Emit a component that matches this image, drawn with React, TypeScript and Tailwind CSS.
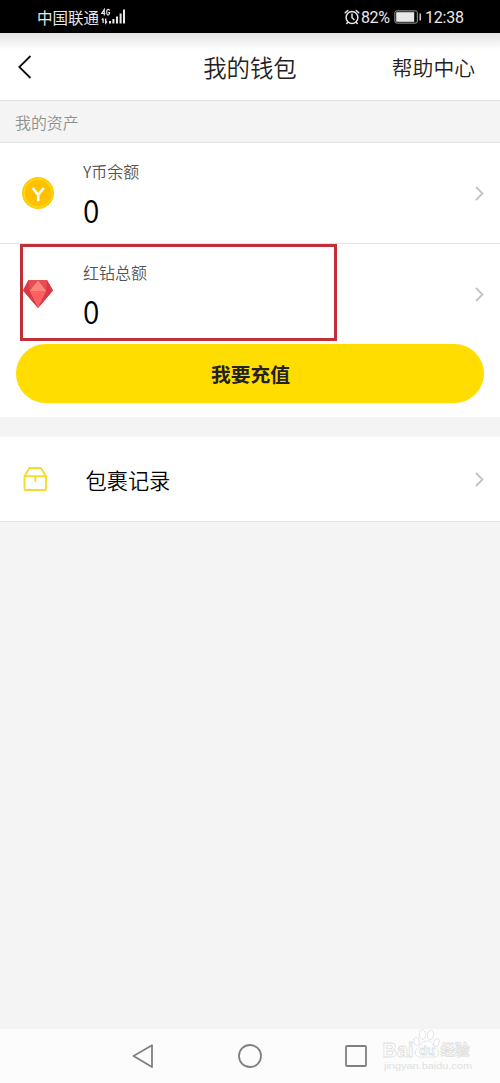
import type { ReactNode } from 'react';

function StatusBar() {
    return (
        <div className="flex h-[33px] shrink-0 items-center justify-between bg-black pr-[37px] pl-[37px] text-[#e8e8e8]">
            <div className="flex items-center">
                <span className="mt-[2px] text-[15.5px] leading-none whitespace-nowrap">中国联通</span>
                <svg className="ml-[2px]" width="25" height="17" viewBox="0 0 25 17" fill="none" stroke="currentColor">
                    <path d="M3.3 7.5V1.3L0.7 5.4H4.3M8.6 2.6Q8.4 1.4 7.2 1.4Q5.7 1.4 5.7 4.2Q5.7 7 7.2 7Q8.5 7 8.6 4.6H7.2" strokeWidth="1.1" />
                    <path d="M2.1 15V10.5M1 12L2.1 10.5M4.7 10.5V15L6 13.5" strokeWidth="1.3" />
                    <path d="M9 15.5V13M12.4 15.5V11M16 15.5V8.5M19.6 15.5V5.5M23 15.5V1.5" strokeWidth="2" />
                </svg>
            </div>
            <div className="flex items-center font-['Roboto','Noto_Sans_CJK_SC',sans-serif] text-base leading-none">
                <svg width="16" height="16" viewBox="0 0 16 16" fill="none" stroke="currentColor" strokeWidth="1.5" strokeLinecap="round">
                    <circle cx="8" cy="8.5" r="5.9" />
                    <path d="M8 5V8.7L10 10.5M1.2 3.8L3.8 1.5M14.8 3.8L12.2 1.5M3.8 13.2L2.8 14.5M12.2 13.2L13.2 14.5" />
                </svg>
                <span className="mt-[2px] ml-px w-[30px] tracking-[-0.4px]">82%</span>
                <svg className="ml-[3px]" width="28" height="14" viewBox="0 0 28 14" fill="none">
                    <rect x="0.9" y="0.9" width="22.4" height="12.2" rx="1.8" stroke="#a0a0a0" />
                    <rect x="2.2" y="2.2" width="18" height="9.6" fill="#e8e8e8" />
                    <path d="M26.2 3.5V10.5" stroke="#d0d0d0" strokeWidth="1.5" />
                </svg>
                <span className="mt-[2px] ml-[3px] w-[38px] tracking-[-0.2px] whitespace-nowrap">12:38</span>
            </div>
        </div>
    );
}

function Arrow() {
    return (
        <svg className="mr-4 ml-auto shrink-0" width="9" height="15" viewBox="0 0 9 15" fill="none" stroke="#c3c3c3" strokeWidth="1.8">
            <path d="M1 1L7.5 7.5L1 14" />
        </svg>
    );
}

function CoinIcon() {
    return (
        <svg width="32" height="32" viewBox="0 0 32 32" fill="none">
            <circle cx="16" cy="16" r="16" fill="#ffcb05" />
            <circle cx="16" cy="16" r="14" fill="#ffc000" stroke="#ffe01f" strokeWidth="1" />
            <path d="M10.7 11L16.2 18L21.7 11M16.2 17.5V24.2" stroke="#fff" strokeWidth="2.6" />
        </svg>
    );
}

function DiamondIcon() {
    return (
        <svg width="32" height="30" viewBox="0 0 32 30">
            <path d="M6.5 1H25L31 11.5L16 29L1 11.5Z" fill="#d93a45" />
            <path d="M16 1L7.5 12H24.5Z" fill="#ff8578" />
            <path d="M7.5 12H24.5L16 29Z" fill="#ff5f5f" />
            <path d="M6.5 1H16L7.5 12ZM25 1H16L24.5 12Z" fill="#e84c54" />
            <path d="M6.5 1L1 11.5L7.5 12ZM25 1L31 11.5L24.5 12Z" fill="#d83b47" />
            <path d="M1 11.5L7.5 12L16 29ZM31 11.5L24.5 12L16 29Z" fill="#d43c48" />
        </svg>
    );
}

function PackageIcon() {
    return (
        <svg width="26" height="26" viewBox="0 0 26 26" fill="none" stroke="#f3dc2e" strokeWidth="1.9" strokeLinejoin="round" strokeLinecap="round">
            <path d="M2.5 10.2L7.5 2H18.8L24 10.2V22.4Q24 24 22.4 24H4.1Q2.5 24 2.5 22.4ZM2.5 10.2H24M13.4 10.2V15" />
        </svg>
    );
}

function AssetRow({ icon, label, value }: { icon: ReactNode; label: string; value: string }) {
    return (
        <div className="flex h-[100px] items-center">
            <div className="ml-[22px] w-[61px]">{icon}</div>
            <div className="pt-[6px]">
                <p className="text-base leading-5 font-[350] text-[#555]">{label}</p>
                <p className="mt-[7px] text-[32px] leading-[43px] font-[350] text-black">
                    <span className="inline-block origin-left scale-x-93">{value}</span>
                </p>
            </div>
            <Arrow />
        </div>
    );
}

function Watermark() {
    return (
        <svg className="absolute top-0 left-[380px]" width="100" height="46" viewBox="0 0 100 46" fill="#fff" stroke="#dedede" strokeWidth="0.8">
            <text x="2.5" y="27.5" fontFamily="Liberation Sans, sans-serif" fontSize="20" fontWeight="bold" textLength="31" lengthAdjust="spacingAndGlyphs">Bai</text>
            <ellipse cx="36.5" cy="12.5" rx="2.7" ry="4" transform="rotate(-15 36.5 12.5)" />
            <ellipse cx="42.5" cy="5.5" rx="3" ry="4.7" />
            <ellipse cx="50.5" cy="6" rx="3" ry="4.7" transform="rotate(12 50.5 6)" />
            <ellipse cx="56.5" cy="13.5" rx="2.7" ry="4" transform="rotate(18 56.5 13.5)" />
            <path d="M46.5 12C41 12 41 17 37 20C33 24 36 28 40 28H54C59 28 60 23 56 19.5C52 16 52 12 46.5 12Z" />
            <text x="39" y="26" fontFamily="Liberation Sans, sans-serif" fontSize="13" fontWeight="bold">du</text>
            <text x="60.5" y="26" fontFamily="Noto Sans CJK SC, sans-serif" fontSize="14.5" fontWeight="bold">经验</text>
            <text x="4" y="40" fontFamily="Liberation Sans, sans-serif" fontSize="9" stroke="none" fill="#e0e0e0" textLength="88" lengthAdjust="spacingAndGlyphs">jingyan.baidu.com</text>
        </svg>
    );
}

function NavBar() {
    return (
        <div className="relative mt-auto flex h-[54px] shrink-0 items-center bg-[#fcfcfc]">
            <svg className="ml-[131px]" width="24" height="26" viewBox="0 0 24 26" fill="none" stroke="#808080" strokeWidth="1.8" strokeLinejoin="round">
                <path d="M2.5 13L21 2.3V24Z" />
            </svg>
            <svg className="ml-[82px]" width="26" height="26" viewBox="0 0 26 26" fill="none" stroke="#808080" strokeWidth="1.8">
                <circle cx="13" cy="13" r="11" />
            </svg>
            <svg className="ml-[81px]" width="24" height="26" viewBox="0 0 24 26" fill="none" stroke="#808080" strokeWidth="1.8">
                <rect x="2" y="3" width="20" height="20" rx="1" />
            </svg>
            <Watermark />
        </div>
    );
}

export default function App() {
    return (
        <div className="flex h-[1083px] w-[500px] flex-col overflow-hidden bg-[#f4f4f4] font-['Noto_Sans_CJK_SC',sans-serif]">
            <StatusBar />
            <header className="grid h-[68px] shrink-0 grid-cols-3 items-center border-b border-[#dfdfdf] bg-linear-to-b from-[#e4e4e4] via-white via-25% to-white text-[#222]">
                <svg className="ml-[17px]" width="16" height="26" viewBox="0 0 16 26" fill="none" stroke="#111" strokeWidth="1.8">
                    <path d="M13.5 2L2.3 13L13.5 24" />
                </svg>
                <h1 className="pt-[2px] text-center text-[23.4px] leading-none font-[350] whitespace-nowrap">我的钱包</h1>
                <span className="mr-[25px] pt-[2px] text-right text-[20.8px] leading-none font-[350] whitespace-nowrap">帮助中心</span>
            </header>
            <h2 className="flex h-[42px] shrink-0 items-center border-b border-[#e4e4e4] pt-[2px] pl-[15px] text-[15.9px] font-[350] text-[#909090]">我的资产</h2>
            <section className="relative h-[274px] shrink-0 bg-white">
                <AssetRow icon={<CoinIcon />} label="Y币余额" value="0" />
                <div className="border-t border-[#e4e4e4]">
                    <AssetRow icon={<DiamondIcon />} label="红钻总额" value="0" />
                </div>
                <button className="mx-4 block h-[59px] w-[468px] rounded-full bg-[#ffdd00] pt-px pl-px text-[19.8px] font-bold text-[#222]">我要充值</button>
                <div className="absolute top-[101px] left-5 h-[97px] w-[317px] border-3 border-[#c12f38]" />
            </section>
            <section className="mt-5 flex h-[85px] shrink-0 items-center border-b border-[#e2e2e2] bg-white">
                <div className="ml-[22px] w-[63.5px]">
                    <PackageIcon />
                </div>
                <span className="pt-[2px] text-[21.2px] font-[350] text-black">包裹记录</span>
                <Arrow />
            </section>
            <NavBar />
        </div>
    );
}
